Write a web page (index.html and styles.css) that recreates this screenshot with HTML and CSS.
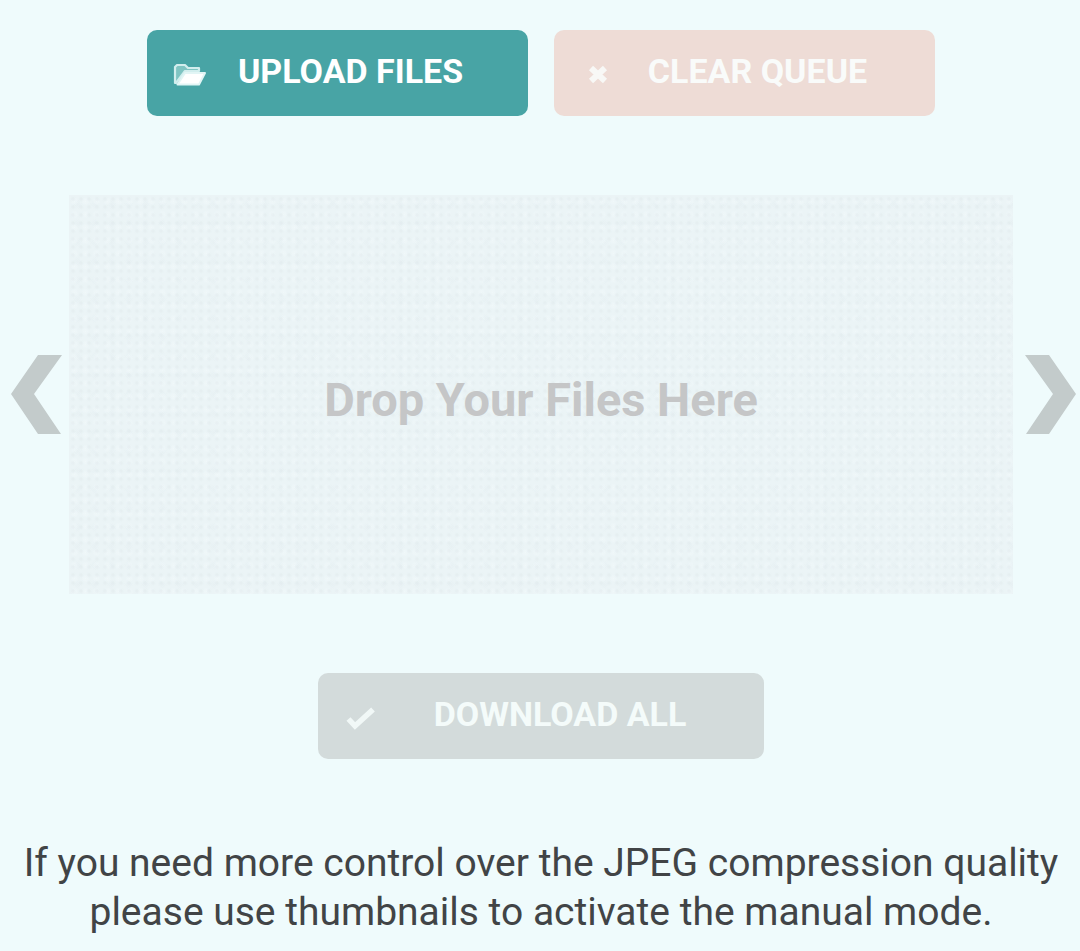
FILE: index.html
```html
<!DOCTYPE html>
<html lang="en">
<head>
<meta charset="utf-8">
<meta name="viewport" content="width=device-width, initial-scale=1">
<title>Image compressor</title>
<link rel="stylesheet" href="styles.css">
</head>
<body>
<main class="page">
  <div class="actions">
    <button class="btn btn-upload" type="button">
      <svg class="icon" viewBox="0 0 34 26" aria-hidden="true">
        <path d="M2 21V5l2-2h8l3 3h11v3H12L3 21z" fill="#7fc4c2" stroke="#d2eeee" stroke-width="2.200" stroke-linejoin="round"/>
        <path d="M12 11h20l-6 11.500H4.500z" fill="#fff" stroke="#e2f5f5" stroke-width="2" stroke-linejoin="round"/>
      </svg>
      <span class="label">UPLOAD FILES</span>
    </button>
    <button class="btn btn-clear" type="button">
      <svg class="icon" viewBox="0 0 34 26" aria-hidden="true">
        <path d="M18 6l14 13M32 6L18 19" transform="translate(-7 0)" fill="none" stroke="#f8f8f6" stroke-width="6"/>
      </svg>
      <span class="label">CLEAR QUEUE</span>
    </button>
  </div>

  <div class="carousel">
    <button class="arrow" type="button" aria-label="Previous">
      <svg viewBox="0 0 51 79" aria-hidden="true"><path d="M27 0h24L23 39l27 40H27L0 39z"/></svg>
    </button>
    <section class="dropzone">Drop Your Files Here</section>
    <button class="arrow arrow-next" type="button" aria-label="Next">
      <svg viewBox="0 0 51 79" aria-hidden="true"><path d="M0 0h24l27 39-27 40H1l27-40z"/></svg>
    </button>
  </div>

  <button class="btn btn-download" type="button">
    <svg class="icon" viewBox="0 0 34 26" aria-hidden="true">
      <path d="M4.500 14l6.500 7L29 4.500" fill="none" stroke="#f1f8f7" stroke-width="5.500"/>
    </svg>
    <span class="label">DOWNLOAD ALL</span>
  </button>

  <p class="note">If you need more control over the JPEG compression quality please use thumbnails to activate the manual mode.</p>
</main>
</body>
</html>
```
FILE: styles.css
```css
* { box-sizing: border-box; }

body {
  margin: 0;
  background: #effbfc;
  color: #414446;
  font-family: Roboto, "Liberation Sans", sans-serif;
}

.page {
  display: flex;
  flex-direction: column;
  align-items: center;
  padding-top: 30px;
}

.actions {
  display: flex;
  justify-content: center;
  gap: 26px;
  width: 100%;
  padding-left: 2px;
}

.btn {
  display: flex;
  align-items: center;
  flex: 0 1 381px;
  min-height: 86px;
  padding: 0 0 4px 26px;
  border: 0;
  border-radius: 10px;
  font: 700 34px/40px Roboto, "Liberation Sans", sans-serif;
  cursor: pointer;
}

.icon {
  flex: none;
  width: 34px;
  height: 26px;
  margin: 8px -34px 0 0;
}

.label { flex: 1; text-align: center; }

.btn-upload { background: #48a4a5; color: #fff; }
.btn-clear { background: #eedcd6; color: #f9fbfa; }

.btn-download {
  flex: none;
  width: 446px;
  max-width: 100%;
  margin-left: 2px;
  background: #d3dbdb;
  color: #f4fbfa;
}

.btn-download .label { padding-left: 12px; }

.carousel {
  display: flex;
  align-items: center;
  width: 100%;
  margin: 79px 0;
  padding: 0 4px 0 11px;
}

.arrow {
  flex: none;
  width: 51px;
  padding: 0;
  border: 0;
  background: none;
  cursor: pointer;
}

.arrow svg { display: block; width: 100%; fill: #c3cbcb; }

.dropzone {
  flex: 1;
  display: flex;
  align-items: center;
  justify-content: center;
  min-height: 399px;
  margin: 0 12px 0 7px;
  padding-top: 10px;
  background-color: #ebf4f6;
  background-image:
    radial-gradient(circle, rgba(222, 232, 235, .5), transparent 3px),
    radial-gradient(circle, rgba(242, 250, 251, .6), transparent 4px),
    radial-gradient(circle, rgba(224, 234, 237, .3), transparent 5px);
  background-size: 8px 8px, 11px 13px, 17px 19px;
  color: #c5c6c7;
  font-size: 47px;
  font-weight: 700;
  line-height: 56px;
  text-align: center;
}

.note {
  margin: 0;
  padding: 80px 8px 13px 10px;
  font-size: 39px;
  line-height: 49px;
  text-align: center;
}
```
